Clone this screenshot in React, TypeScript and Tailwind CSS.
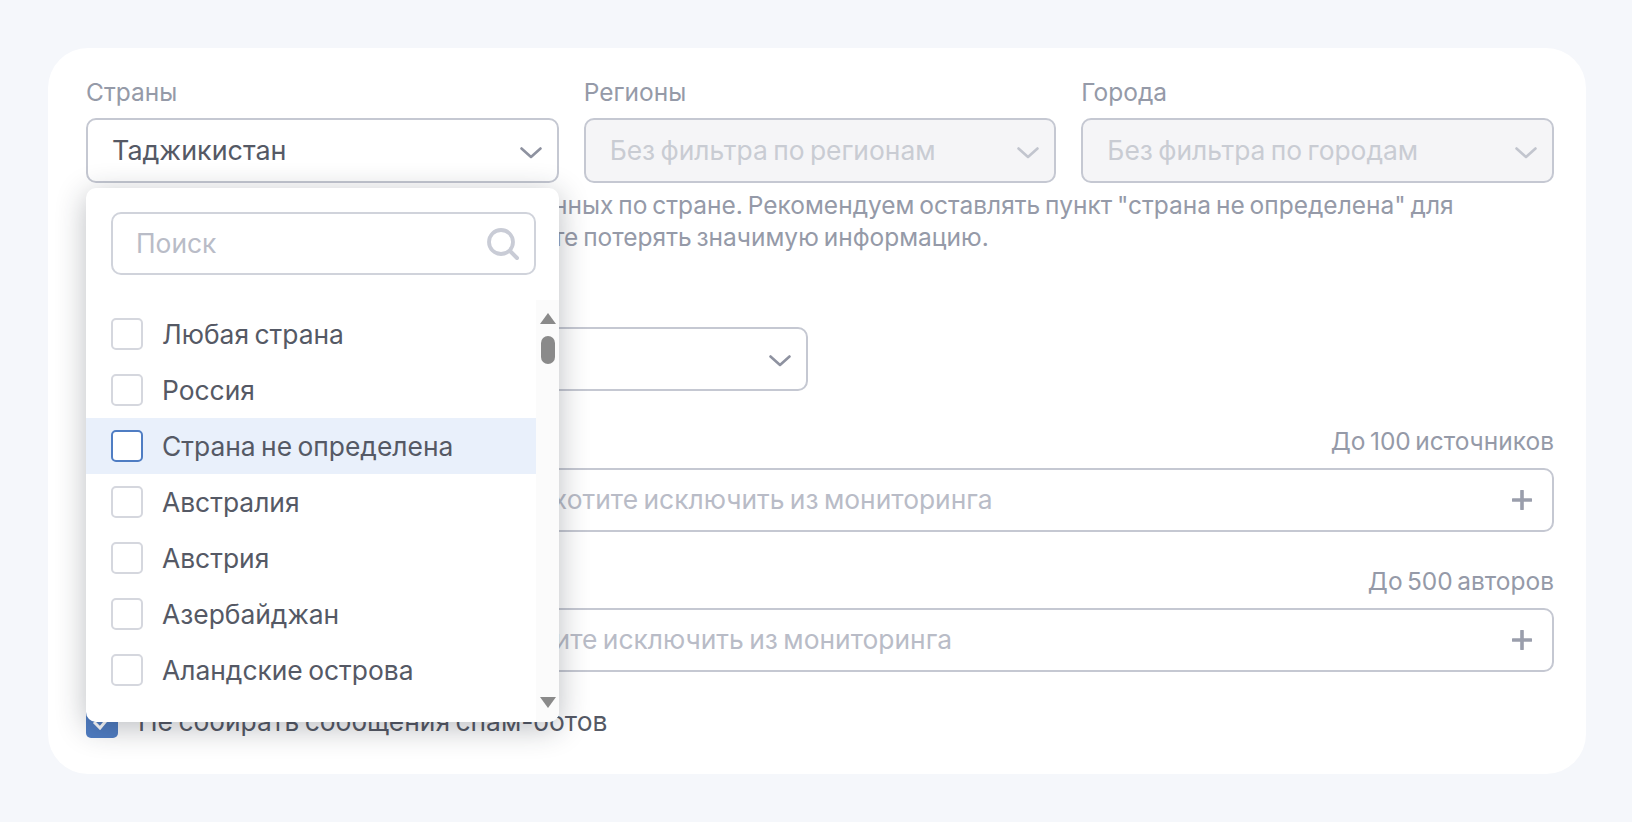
const countries = ["Любая страна", "Россия", "Страна не определена", "Австралия", "Австрия", "Азербайджан", "Аландские острова"];

function Chevron({ className }: { className: string }) {
  return (
    <svg width="22" height="12" viewBox="0 0 22 12" fill="none" className={`mt-[4px] ${className}`}>
      <path d="M1.5 1.5 L11 10 L20.5 1.5" stroke="currentColor" strokeWidth="2.6" strokeLinecap="round" strokeLinejoin="round" />
    </svg>
  );
}

function Plus() {
  return (
    <svg width="20" height="20" viewBox="0 0 20 20" className="text-[#9a9eac] shrink-0">
      <path d="M10 1 V19 M1 10 H19" stroke="currentColor" strokeWidth="3.6" strokeLinecap="round" />
    </svg>
  );
}

function SelectField({ label, value, disabled }: { label: string; value: string; disabled?: boolean }) {
  return (
    <div className="flex flex-col gap-[10px]">
      <div className="text-[24.5px] leading-[32px] text-[#959aa8]">{label}</div>
      <div className={`h-[65px] rounded-[10px] border-2 border-[#c5c8d2] pl-[24px] pr-[15px] flex items-center justify-between ${disabled ? "bg-[#f5f5f7]" : "bg-white"}`}>
        <span className={`[word-spacing:-2px] ${disabled ? "text-[26.4px] text-[#c9ccd3]" : "text-[26.9px] text-[#555965]"}`}>{value}</span>
        <Chevron className={disabled ? "text-[#c2c5ce]" : "text-[#8e92a0]"} />
      </div>
    </div>
  );
}

function AddField({ limit, placeholder }: { limit: string; placeholder: string }) {
  return (
    <div className="flex flex-col">
      <div className="h-[32px] text-[24.5px] leading-[32px] [word-spacing:-2.5px] text-[#959aa8] text-right">{limit}</div>
      <div className="mt-[11px] h-[64px] rounded-[10px] border-2 border-[#c5c8d2] bg-white pl-[24px] pr-[20px] flex items-center justify-between">
        <span className="text-[26.4px] [word-spacing:-2px] text-[#b9bcc7]">{placeholder}</span>
        <Plus />
      </div>
    </div>
  );
}

export default function App() {
  return (
    <div className="h-[822px] w-[1632px] overflow-hidden bg-[#f5f7fb] pl-[48px] pt-[48px] font-['Inter',sans-serif]">
      <div className="relative h-[726px] w-[1538px] rounded-[40px] bg-white pl-[38px] pr-[32px] pt-[28px]">
        <div className="grid grid-cols-3 gap-[25px]">
          <SelectField label="Страны" value="Таджикистан" />
          <SelectField label="Регионы" value="Без фильтра по регионам" disabled />
          <SelectField label="Города" value="Без фильтра по городам" disabled />
        </div>

        <p className="mt-[6px] text-[24.5px] leading-[32px] [word-spacing:-2px] text-[#959aa8] w-[1440px] whitespace-nowrap">
          <span className="inline-block w-[467px]" />нных по стране. Рекомендуем оставлять пункт "страна не определена" для
          <br />
          <span className="inline-block w-[467px]" />те потерять значимую информацию.
        </p>

        <div className="mt-[33px] w-[722px] flex flex-col gap-[9px]">
          <div className="h-[32px] text-[24.5px] leading-[32px] text-[#959aa8]">Язык</div>
          <div className="h-[64px] rounded-[10px] border-2 border-[#c5c8d2] bg-white pr-[15px] flex items-center justify-end">
            <Chevron className="text-[#8e92a0]" />
          </div>
        </div>

        <div className="mt-[34px] flex flex-col gap-[33px]">
          <AddField limit="До 100 источников" placeholder="Введите свои источники, которые хотите исключить из мониторинга" />
          <AddField limit="До 500 авторов" placeholder="Укажите имя авторов, которых хотите исключить из мониторинга" />
        </div>

        <div className="mt-[30px] flex items-center gap-[20px]">
          <div className="h-[32px] w-[32px] rounded-[5px] bg-[#4f7dc3] flex items-center justify-center">
            <svg width="20" height="16" viewBox="0 0 20 16" fill="none">
              <path d="M2 8 L8 14 L18 2" stroke="white" strokeWidth="3" />
            </svg>
          </div>
          <span className="text-[26.4px] [word-spacing:-2px] text-[#555965]">Не собирать сообщения спам-ботов</span>
        </div>

        <div className="absolute left-[38px] top-[140px] h-[534px] w-[473px] rounded-[10px] bg-white shadow-[0_6px_30px_rgba(30,35,50,0.3)] overflow-hidden">
          <div className="pl-[25px] pr-[23px] pt-[24px]">
            <div className="h-[63px] rounded-[10px] border-2 border-[#d0d3db] pl-[23px] pr-[14px] flex items-center justify-between">
              <span className="text-[26.4px] text-[#b9bcc7]">Поиск</span>
              <svg width="34" height="34" viewBox="0 0 34 34" fill="none" className="text-[#c9ccd6]">
                <circle cx="15" cy="15" r="12" stroke="currentColor" strokeWidth="3.8" />
                <path d="M24 24 L31 31" stroke="currentColor" strokeWidth="4" strokeLinecap="round" />
              </svg>
            </div>
          </div>
          <div className="mt-[25px] flex">
            <div className="flex-1 pt-[6px]">
              {countries.map((c, i) => (
                <div key={c} className={`h-[56px] pl-[25px] flex items-center gap-[19px] ${i === 2 ? "bg-[#e9f0fb]" : ""}`}>
                  <div className={`h-[32px] w-[32px] rounded-[5px] border-2 bg-white ${i === 2 ? "border-[#4f7dc3]" : "border-[#d5d7de]"}`} />
                  <span className="pt-[2px] text-[26.4px] [word-spacing:-2px] text-[#555965]">{c}</span>
                </div>
              ))}
            </div>
            <div className="w-[23px] h-[422px] bg-[#fbfbfb] flex flex-col items-center pt-[13px]">
              <svg width="16" height="11" viewBox="0 0 16 11"><path d="M8 0 L16 11 H0 Z" fill="#8a8a8a" /></svg>
              <div className="mt-[12px] h-[28px] w-[14px] rounded-[7px] bg-[#8a8a8a]" />
              <svg width="16" height="11" viewBox="0 0 16 11" className="mt-[333px]"><path d="M8 11 L16 0 H0 Z" fill="#8a8a8a" /></svg>
            </div>
          </div>
        </div>
      </div>
    </div>
  );
}
